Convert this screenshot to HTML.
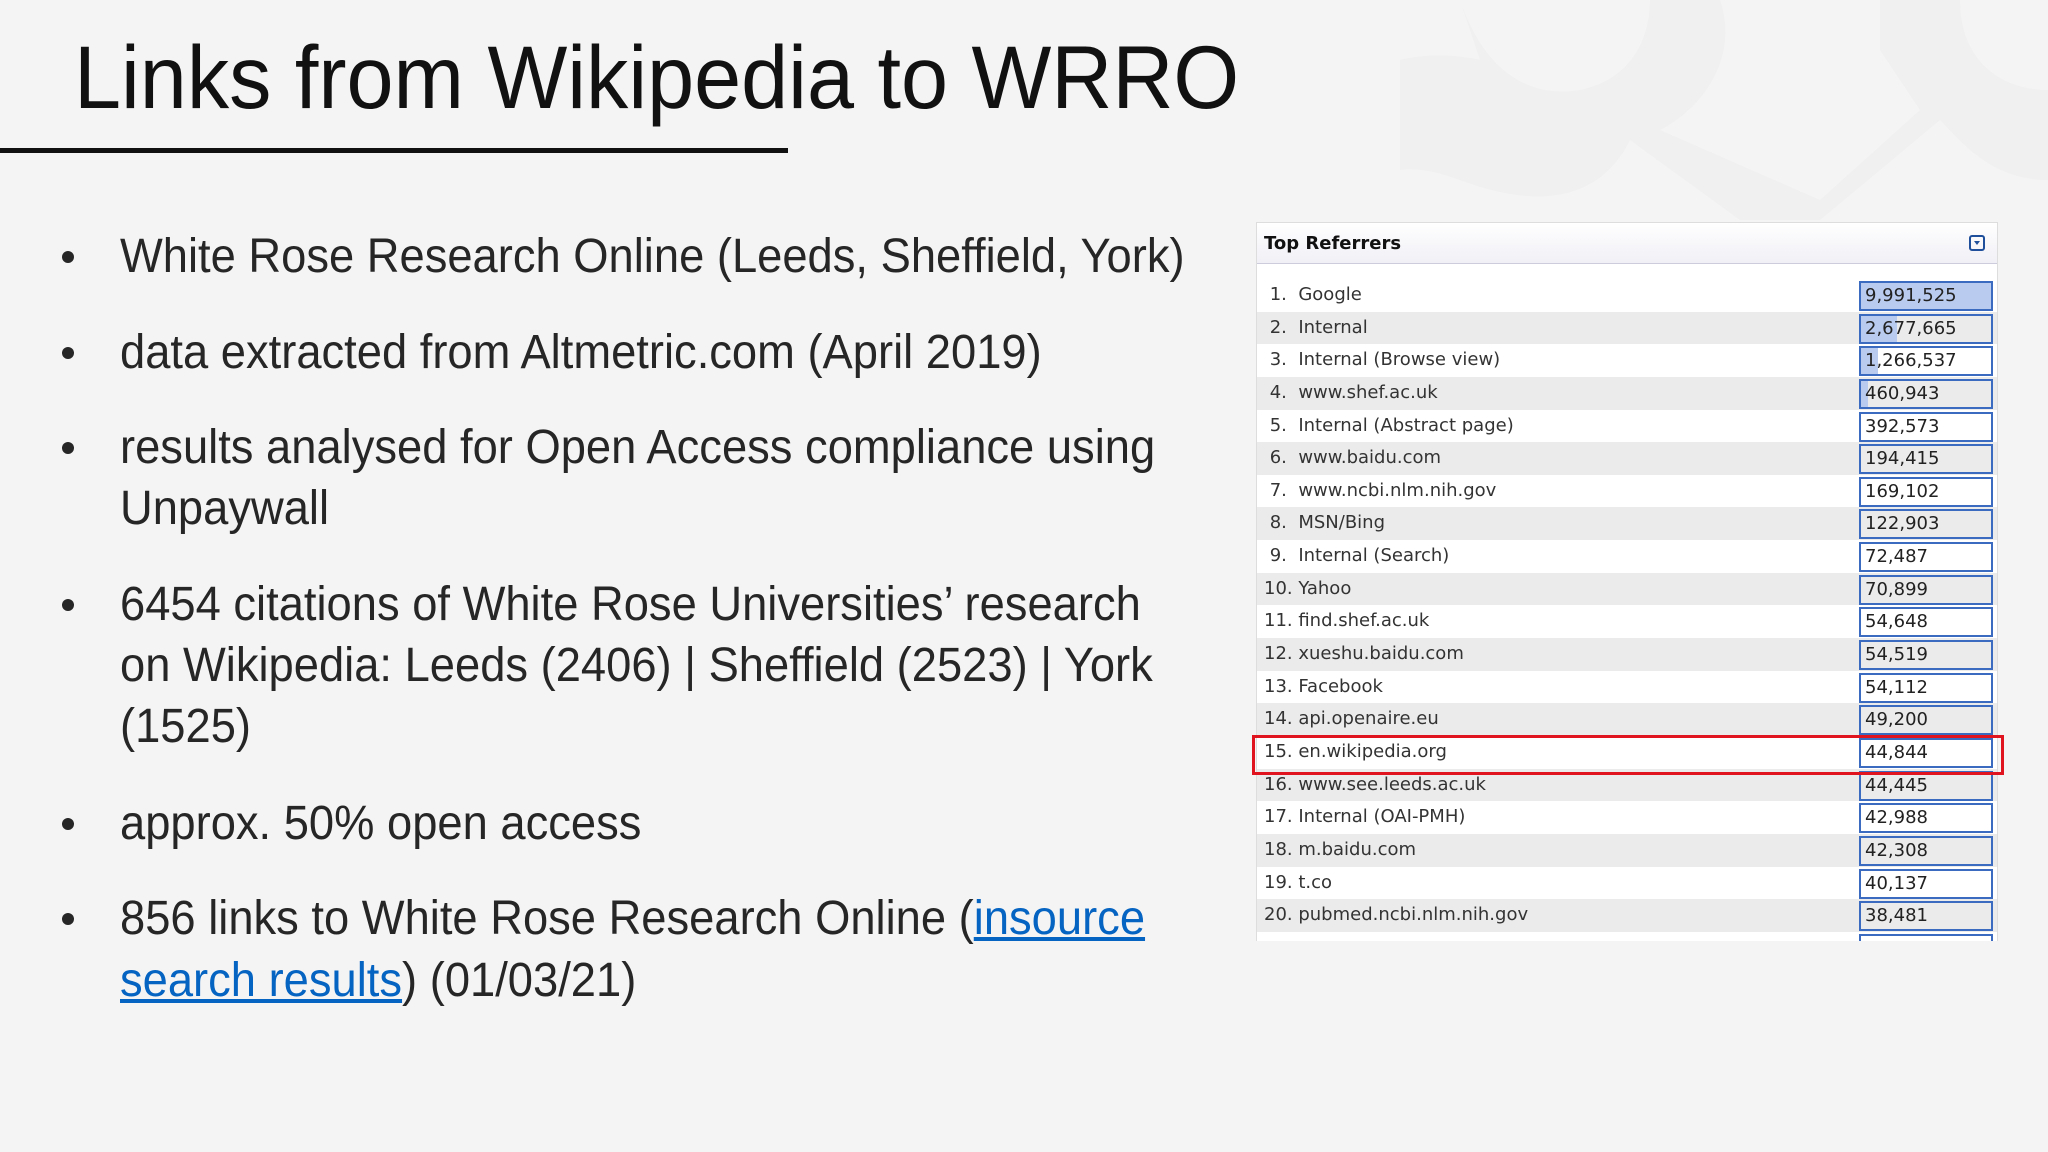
<!DOCTYPE html>
<html><head><meta charset="utf-8"><style>
body{margin:0;width:2048px;height:1152px;background:#f4f4f4;overflow:hidden;position:relative;font-family:"Liberation Sans",sans-serif;}
.t{position:absolute;left:74px;top:22px;font-size:89px;color:#111;white-space:nowrap;transform:scaleX(0.95);transform-origin:left;line-height:110px}
.ul{position:absolute;left:0;top:148px;width:788px;height:5px;background:#111}
.l{position:absolute;left:120px;font-size:48px;line-height:60px;color:#262626;white-space:nowrap;transform:scaleX(0.944);transform-origin:left}
.b{position:absolute;left:62px;width:12px;height:12px;border-radius:50%;background:#262626}
a{color:#0563c1;text-decoration:underline}
.panel{position:absolute;left:1256px;top:222px;width:740px;height:718px;background:#fff;border:1px solid #ddd;border-bottom:none;overflow:hidden;font-family:"DejaVu Sans",sans-serif;font-size:18px;color:#333}
.hd{height:40px;border-bottom:1px solid #ccd;background:linear-gradient(#fff,#f0f0f6);font-weight:bold;font-size:18px;line-height:42px;padding-left:7px;color:#111;position:relative}
.ic{position:absolute;right:12px;top:12px;width:12px;height:12px;border:2px solid #1f4f9a;border-radius:3px}
.ic:after{content:"";position:absolute;left:3px;top:4px;border-left:3px solid transparent;border-right:3px solid transparent;border-top:4px solid #1f4f9a}
.rows{position:absolute;top:56px;left:0;right:0}
.r{height:32.65px;line-height:32px;position:relative;padding-left:7px;white-space:nowrap}
.r:nth-child(even){background:#ebebeb}
.v{position:absolute;left:602px;top:2px;width:126px;height:26px;border:2px solid #3a6bc0;box-sizing:content-box;line-height:26px;padding-left:4px;color:#222;background:#fff;overflow:hidden}
.r:nth-child(even) .v{background:#ebebeb}
.bar{position:absolute;left:0;top:0;bottom:0;background:#b9cbef}
.v span{position:relative}
.red{position:absolute;left:1252px;top:735px;width:746px;height:34px;border:3px solid #e0141e}
</style></head><body>
<svg style="position:absolute;left:1400px;top:0" width="648" height="220"><path d="M60 0 C80 60 120 100 180 90 C230 80 250 40 250 0 L320 0 C340 60 300 110 260 130 L420 200 L520 110 L480 50 L480 0 L560 0 C560 60 600 90 648 90 L648 180 C590 180 560 140 540 120 L420 220 L340 220 L230 140 C200 200 140 210 60 180 C20 165 0 170 0 170 L0 60 C40 50 80 60 80 60 Z" fill="#ececec" opacity="0.45"/></svg>
<div class="t">Links from Wikipedia to WRRO</div>
<div class="ul"></div>
<div class="b" style="top:251px"></div><div class="l" style="top:227px">White Rose Research Online (Leeds, Sheffield, York)</div>
<div class="b" style="top:347px"></div><div class="l" style="top:323px">data extracted from Altmetric.com (April 2019)</div>
<div class="b" style="top:442px"></div><div class="l" style="top:418px">results analysed for Open Access compliance using</div>
<div class="l" style="top:479px">Unpaywall</div>
<div class="b" style="top:599px"></div><div class="l" style="top:575px">6454 citations of White Rose Universities’ research</div>
<div class="l" style="top:636px">on Wikipedia: Leeds (2406) | Sheffield (2523) | York</div>
<div class="l" style="top:697px">(1525)</div>
<div class="b" style="top:818px"></div><div class="l" style="top:794px">approx. 50% open access</div>
<div class="b" style="top:913px"></div><div class="l" style="top:889px">856 links to White Rose Research Online (<a>insource</a></div>
<div class="l" style="top:951px"><a>search results</a>) (01/03/21)</div>
<div class="panel"><div class="hd">Top Referrers<div class="ic"></div></div>
<div class="rows">
<div class="r">&nbsp;1.&nbsp; Google<div class="v"><div class="bar" style="width:100%"></div><span>9,991,525</span></div></div>
<div class="r">&nbsp;2.&nbsp; Internal<div class="v"><div class="bar" style="width:28%"></div><span>2,677,665</span></div></div>
<div class="r">&nbsp;3.&nbsp; Internal (Browse view)<div class="v"><div class="bar" style="width:13%"></div><span>1,266,537</span></div></div>
<div class="r">&nbsp;4.&nbsp; www.shef.ac.uk<div class="v"><div class="bar" style="width:5%"></div><span>460,943</span></div></div>
<div class="r">&nbsp;5.&nbsp; Internal (Abstract page)<div class="v"><span>392,573</span></div></div>
<div class="r">&nbsp;6.&nbsp; www.baidu.com<div class="v"><span>194,415</span></div></div>
<div class="r">&nbsp;7.&nbsp; www.ncbi.nlm.nih.gov<div class="v"><span>169,102</span></div></div>
<div class="r">&nbsp;8.&nbsp; MSN/Bing<div class="v"><span>122,903</span></div></div>
<div class="r">&nbsp;9.&nbsp; Internal (Search)<div class="v"><span>72,487</span></div></div>
<div class="r">10. Yahoo<div class="v"><span>70,899</span></div></div>
<div class="r">11. find.shef.ac.uk<div class="v"><span>54,648</span></div></div>
<div class="r">12. xueshu.baidu.com<div class="v"><span>54,519</span></div></div>
<div class="r">13. Facebook<div class="v"><span>54,112</span></div></div>
<div class="r">14. api.openaire.eu<div class="v"><span>49,200</span></div></div>
<div class="r">15. en.wikipedia.org<div class="v"><span>44,844</span></div></div>
<div class="r">16. www.see.leeds.ac.uk<div class="v"><span>44,445</span></div></div>
<div class="r">17. Internal (OAI-PMH)<div class="v"><span>42,988</span></div></div>
<div class="r">18. m.baidu.com<div class="v"><span>42,308</span></div></div>
<div class="r">19. t.co<div class="v"><span>40,137</span></div></div>
<div class="r">20. pubmed.ncbi.nlm.nih.gov<div class="v"><span>38,481</span></div></div>
<div class="r">&nbsp;<div class="v"><span></span></div></div>
</div></div>
<div class="red"></div>
</body></html>
